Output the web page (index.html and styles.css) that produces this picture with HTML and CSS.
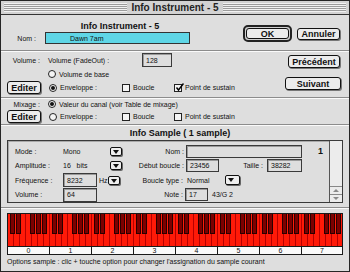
FILE: index.html
```html
<!DOCTYPE html>
<html>
<head>
<meta charset="utf-8">
<link rel="stylesheet" href="styles.css">
</head>
<body>
<div class="win">
  <div class="titlebar"><div class="stripes"></div><div class="title">Info Instrument - 5</div><div class="stripes"></div></div>

  <div class="top">
    <div class="top-left">
      <div class="hdr">Info Instrument - 5</div>
      <div class="row nom"><span class="lbl">Nom :</span><div class="field cyan">Dawn 7am</div></div>
    </div>
    <div class="top-btns">
      <div class="defring"><div class="btn ok">OK</div></div>
      <div class="btn annuler">Annuler</div>
    </div>
  </div>
  <div class="sep"></div>

  <div class="vol">
    <div class="vol-left">
      <div class="row ra"><span class="lbl">Volume :</span><span class="fade">Volume (FadeOut) :</span><div class="field f128">128</div></div>
      <div class="row rb"><span class="radio"></span><span class="rtext">Volume de base</span></div>
      <div class="row rc"><div class="btn edit">Editer</div><span class="radio on"></span><span class="env">Enveloppe :</span><span class="cb"></span><span class="cbl">Boucle</span><span class="cb on"><svg width="9" height="9" viewBox="0 0 9 9"><path d="M1.5 4.5 L3.5 7 L8.5 0.5" fill="none" stroke="#000" stroke-width="1.4"/></svg></span><span class="cbl2">Point de sustain</span></div>
    </div>
    <div class="vol-btns"><div class="btn prev">Précédent</div><div class="btn next">Suivant</div></div>
  </div>
  <div class="sep"></div>

  <div class="mix">
    <div class="row rd"><span class="lbl">Mixage :</span><span class="radio on"></span><span class="rtext">Valeur du canal (voir Table de mixage)</span></div>
    <div class="row re"><div class="btn edit">Editer</div><span class="radio"></span><span class="env">Enveloppe :</span><span class="cb"></span><span class="cbl">Boucle</span><span class="cb"></span><span class="cbl2">Point de sustain</span></div>
  </div>
  <div class="sep"></div>

  <div class="shdr">Info Sample ( 1 sample)</div>
  <div class="sbox">
    <div class="sgrid">
      <div class="srow">
        <span class="sl">Mode :</span><span class="sv">Mono</span><span class="dd"></span>
        <span class="sr">Nom :</span><div class="field fnom"></div><span class="num">1</span>
      </div>
      <div class="srow">
        <span class="sl">Amplitude :</span><span class="sv">16&nbsp;&nbsp;&nbsp;bits</span><span class="dd"></span>
        <span class="sr">Début boucle :</span><div class="field fdeb">23456</div><span class="tl">Taille :</span><div class="field ftai">38282</div>
      </div>
      <div class="srow">
        <span class="sl">Fréquence :</span><div class="field ffreq">8232</div><span class="hz">Hz</span><span class="dd dd2"></span>
        <span class="sr sr3">Boucle type :</span><span class="norm">Normal</span><span class="dd dd3"></span>
      </div>
      <div class="srow">
        <span class="sl">Volume :</span><div class="field fvol">64</div>
        <span class="sr sr4">Note :</span><div class="field fnote">17</div><span class="note">43/G 2</span>
      </div>
    </div>
    <div class="sbar"><div class="track"></div><div class="arr up"></div><div class="arr down"></div></div>
  </div>
  <div class="sep sep2"></div>

  <div class="kbd">
    <div class="keys">
      <div class="oct"><span class="bk k1"></span><span class="bk k2"></span><span class="bk k3"></span><span class="bk k4"></span><span class="bk k5"></span></div>
      <div class="oct"><span class="bk k1"></span><span class="bk k2"></span><span class="bk k3"></span><span class="bk k4"></span><span class="bk k5"></span></div>
      <div class="oct"><span class="bk k1"></span><span class="bk k2"></span><span class="bk k3"></span><span class="bk k4"></span><span class="bk k5"></span></div>
      <div class="oct"><span class="bk k1"></span><span class="bk k2"></span><span class="bk k3"></span><span class="bk k4"></span><span class="bk k5"></span></div>
      <div class="oct"><span class="bk k1"></span><span class="bk k2"></span><span class="bk k3"></span><span class="bk k4"></span><span class="bk k5"></span></div>
      <div class="oct"><span class="bk k1"></span><span class="bk k2"></span><span class="bk k3"></span><span class="bk k4"></span><span class="bk k5"></span></div>
      <div class="oct"><span class="bk k1"></span><span class="bk k2"></span><span class="bk k3"></span><span class="bk k4"></span><span class="bk k5"></span></div>
      <div class="oct"><span class="bk k1"></span><span class="bk k2"></span><span class="bk k3"></span><span class="bk k4"></span><span class="bk k5"></span></div>
    </div>
    <div class="labels"><span>0</span><span>1</span><span>2</span><span>3</span><span>4</span><span>5</span><span>6</span><span>7</span></div>
  </div>

  <div class="status">Options sample : clic + touche option pour changer l'assignation du sample courant</div>
</div>
</body>
</html>
```

FILE: styles.css
```css
* { box-sizing: border-box; margin: 0; padding: 0; }
body {
  margin: 0;
  width: 350px;
  height: 272px;
  overflow: hidden;
  background: #dcdcdc;
  font-family: "Liberation Sans", Arial, sans-serif;
  font-size: 7px;
  color: #111;
}
.win {
  width: 350px;
  height: 272px;
  border: 1px solid #262626;
  background: #dedede;
  display: flex;
  flex-direction: column;
}
.titlebar {
  height: 14px;
  flex: none;
  background: #d2d2d2;
  border-bottom: 1px solid #333;
  display: flex;
  align-items: center;
  padding: 0 3px;
  gap: 3px;
}
.stripes {
  flex: 1;
  height: 9px;
  background: repeating-linear-gradient(to bottom, #f2f2f2 0 1px, #9c9c9c 1px 2px);
}
.title {
  font-weight: bold;
  font-size: 10px;
  color: #222;
  padding: 0 1px;
}
.row { display: flex; align-items: center; }
.lbl { width: 39px; text-align: right; flex: none; }
.field {
  border: 1px solid #3a3a3a;
  box-shadow: inset 1px 1px 0 #9a9a9a;
  background: #dedede;
  display: flex;
  align-items: center;
  padding-left: 3px;
  flex: none;
}
.btn {
  border: 1px solid #111;
  border-radius: 3px;
  background: #ececec;
  box-shadow: 1px 1px 0 #777;
  font-weight: bold;
  font-size: 9px;
  display: flex;
  align-items: center;
  justify-content: center;
  color: #111;
  flex: none;
}

/* top */
.top { height: 35px; flex: none; display: flex; }
.top-left { width: 238px; flex: none; }
.hdr { margin-top: 6px; height: 10px; line-height: 10px; text-align: center; font-weight: bold; font-size: 9px; color: #111; }
.nom { margin-top: 1px; }
.nom .lbl { width: 35px; }
.cyan {
  margin-left: 9px;
  width: 145px;
  height: 12px;
  background: #5fd6e6;
  border: 1px solid #333;
  box-shadow: none;
  padding-left: 24px;
}
.top-btns { display: flex; align-items: flex-start; margin-left: 4px; }
.defring {
  margin-top: 10px;
  width: 49px;
  height: 17px;
  border: 2px solid #222;
  border-radius: 5px;
  padding: 1px;
  background: #cfcfcf;
}
.ok { width: 100%; height: 100%; box-shadow: none; }
.annuler { margin-top: 13px; margin-left: 5px; width: 43px; height: 12px; }

.sep { height: 2px; flex: none; border-top: 1px solid #8c8c8c; border-bottom: 1px solid #fafafa; }

/* volume */
.vol { height: 45px; flex: none; display: flex; }
.vol-left { width: 280px; flex: none; }
.ra { height: 16px; }
.fade { margin-left: 8px; width: 94px; }
.f128 { width: 30px; height: 14px; }
.rb { height: 12px; padding-left: 47px; }
.rc { height: 15px; }
.radio {
  width: 8px; height: 8px; border-radius: 50%;
  border: 1px solid #222; background: #f4f4f4; flex: none;
  position: relative;
}
.radio.on::after {
  content: ""; position: absolute; left: 1px; top: 1px;
  width: 4px; height: 4px; border-radius: 50%; background: #111;
}
.rtext { margin-left: 3px; }
.edit { margin-left: 6px; width: 34px; height: 13px; font-size: 9px; }
.rc .radio, .re .radio { margin-left: 8px; }
.env { margin-left: 3px; width: 62px; }
.cb { width: 8px; height: 8px; border: 1px solid #222; background: #f4f4f4; flex: none; position: relative; }
.cb svg { position: absolute; left: 0; top: -2px; }
.cbl { margin-left: 3px; width: 41px; }
.cbl2 { margin-left: 3px; }
.vol-btns { display: flex; flex-direction: column; align-items: flex-end; width: 60px; }
.prev { margin-top: 3px; width: 52px; height: 13px; margin-right: 1px; }
.next { margin-top: 9px; width: 56px; height: 13px; }

/* mix */
.mix { height: 25px; flex: none; }
.rd { height: 10px; }
.rd .radio { margin-left: 8px; }
.re { height: 15px; }

/* sample */
.shdr { height: 14px; flex: none; text-align: center; font-weight: bold; font-size: 9px; line-height: 14px; padding-left: 10px; color: #111; }
.sbox {
  margin: 0 6px 0 6px;
  height: 63px;
  flex: none;
  border: 1px solid #3a3a3a;
  box-shadow: inset 1px 1px 0 #aaa;
  display: flex;
}
.sgrid { flex: 1; padding-top: 3px; }
.srow { height: 14.5px; display: flex; align-items: center; }
.sl { width: 55px; padding-left: 7px; flex: none; }
.sv { width: 47px; flex: none; }
.dd {
  width: 12px; height: 9px; flex: none;
  border: 1px solid #111; border-radius: 2px;
  background: #efefef; box-shadow: 1px 1px 0 #666;
  position: relative;
}
.dd::after {
  content: ""; position: absolute; left: 2px; top: 2px;
  border-left: 3px solid transparent; border-right: 3px solid transparent;
  border-top: 4px solid #111;
}
.sr { width: 64px; text-align: right; padding-right: 2px; flex: none; }
.fnom { width: 116px; height: 13px; }
.num { margin-left: 16px; font-size: 9px; font-weight: bold; }
.fdeb { width: 33px; height: 13px; }
.tl { width: 48px; text-align: right; padding-right: 4px; flex: none; }
.ftai { width: 35px; height: 13px; }
.ffreq { width: 34px; height: 14px; }
.hz { margin-left: 2px; width: 9px; flex: none; }
.dd2 { width: 12px; }
.sr3 { width: 65px; }
.norm { margin-left: 2px; width: 38px; flex: none; }
.dd3 { width: 15px; height: 10px; }
.fvol { width: 34px; height: 14px; }
.sr4 { width: 88px; }
.fnote { width: 23px; height: 13px; }
.note { margin-left: 4px; }
.sbar {
  width: 13px; flex: none;
  border-left: 1px solid #555;
  display: flex; flex-direction: column;
  background: #ececec;
}
.track { flex: 1; }
.arr { height: 8px; border-top: 1px solid #888; position: relative; }
.arr::after {
  content: ""; position: absolute; left: 3px; top: 2px;
  border-left: 3px solid transparent; border-right: 3px solid transparent;
}
.up::after { border-bottom: 3px solid #8a8a8a; }
.down::after { border-top: 3px solid #8a8a8a; }
.sep2 { margin-top: 4px; }

/* keyboard */
.kbd {
  margin: 4px 6px 0 6px;
  width: 336px;
  height: 42px;
  flex: none;
  border: 1px solid #1a1a1a;
  display: flex; flex-direction: column;
}
.keys {
  height: 33px;
  display: flex;
  background: repeating-linear-gradient(to right, #ff1a08 0 5px, #b80000 5px 6px);
}
.oct { width: 42px; flex: none; position: relative; }
.bk {
  position: absolute; top: 0; width: 5px; height: 20px;
  background: #7c0000; border: 1px solid #2a0000; border-top: none;
}
.k1 { left: 2px; }
.k2 { left: 8px; }
.k3 { left: 22px; }
.k4 { left: 28px; }
.k5 { left: 34px; }
.labels { flex: 1; display: flex; background: #fafafa; border-top: 1px solid #1a1a1a; }
.labels span { width: 42px; flex: none; text-align: center; line-height: 7px; font-size: 7px; border-right: 1px solid #1a1a1a; }
.labels span:last-child { border-right: none; width: 40px; }

.status { margin-top: 2px; padding-left: 6px; line-height: 10px; }
```
